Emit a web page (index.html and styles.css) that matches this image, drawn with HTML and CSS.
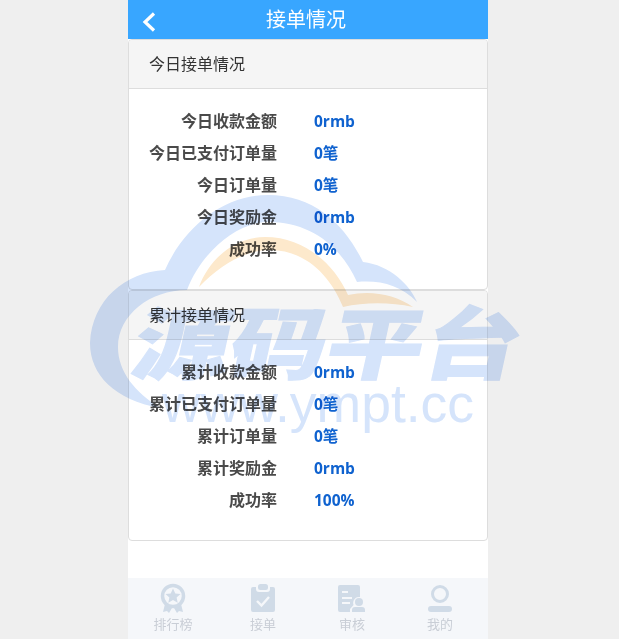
FILE: index.html
```html
<!DOCTYPE html>
<html lang="zh">
<head>
<meta charset="utf-8">
<title>接单情况</title>
<link rel="stylesheet" href="styles.css">
</head>
<body>
<div class="phone">
  <header class="topbar">
    <svg class="back" viewBox="0 0 14 20" width="14" height="20"><path d="M12 1.500 3 10l9 8.500" fill="none" stroke="#fff" stroke-width="3.200"/></svg>
    <h1>接单情况</h1>
  </header>
  <section class="panel">
    <h2>今日接单情况</h2>
    <dl class="stats">
      <div class="row"><dt>今日收款金额</dt><dd>0rmb</dd></div>
      <div class="row"><dt>今日已支付订单量</dt><dd>0笔</dd></div>
      <div class="row"><dt>今日订单量</dt><dd>0笔</dd></div>
      <div class="row"><dt>今日奖励金</dt><dd>0rmb</dd></div>
      <div class="row"><dt>成功率</dt><dd>0%</dd></div>
    </dl>
  </section>
  <section class="panel">
    <h2>累计接单情况</h2>
    <dl class="stats">
      <div class="row"><dt>累计收款金额</dt><dd>0rmb</dd></div>
      <div class="row"><dt>累计已支付订单量</dt><dd>0笔</dd></div>
      <div class="row"><dt>累计订单量</dt><dd>0笔</dd></div>
      <div class="row"><dt>累计奖励金</dt><dd>0rmb</dd></div>
      <div class="row"><dt>成功率</dt><dd>100%</dd></div>
    </dl>
  </section>
  <nav class="tabbar">
    <a class="tab">
      <svg viewBox="0 0 26 30" width="26" height="30"><path d="M5 21 3 29l4-1 2 2 3-5zM21 21l2 8-4-1-2 2-3-5z" fill="#d0dbe7"/><circle cx="13" cy="13" r="10.500" fill="#f5f7fa" stroke="#d0dbe7" stroke-width="3.500"/><path d="m13 5.500 2.300 4.900 5.200.6-3.900 3.500 1.100 5.200-4.700-2.700-4.700 2.700 1.100-5.200L5.500 11l5.200-.6z" fill="#d0dbe7"/></svg>
      <span>排行榜</span>
    </a>
    <a class="tab">
      <svg viewBox="0 0 26 30" width="26" height="30"><path d="M3 4h3v2a3 3 0 0 0 3 3h8a3 3 0 0 0 3-3V4h3a2 2 0 0 1 2 2v21a2 2 0 0 1-2 2H3a2 2 0 0 1-2-2V6a2 2 0 0 1 2-2z" fill="#d0dbe7"/><rect x="8" y="1" width="10" height="6" rx="2.500" fill="#d0dbe7"/><path d="m7 18 4.500 4.500L19 14" fill="none" stroke="#f5f7fa" stroke-width="2.400"/></svg>
      <span>接单</span>
    </a>
    <a class="tab">
      <svg viewBox="0 0 28 28" width="28" height="28"><path d="M2 0h18a2 2 0 0 1 2 2v10a6 6 0 0 0-6.500 8L12 24v3H2a2 2 0 0 1-2-2V2a2 2 0 0 1 2-2z" fill="#d0dbe7"/><path d="M4 7h6M4 13h10M4 18h8" stroke="#f5f7fa" stroke-width="2"/><circle cx="21" cy="17" r="4" fill="#d0dbe7"/><path d="M14 27v-2a3 3 0 0 1 3-3h7a3 3 0 0 1 3 3v2z" fill="#d0dbe7"/></svg>
      <span>审核</span>
    </a>
    <a class="tab">
      <svg viewBox="0 0 26 28" width="26" height="28"><circle cx="13" cy="9" r="7.500" fill="none" stroke="#d0dbe7" stroke-width="3"/><rect x="1" y="21" width="24" height="6" rx="3" fill="#d0dbe7"/></svg>
      <span>我的</span>
    </a>
  </nav>
  <div class="watermark" aria-hidden="true">
    <svg class="cloud" viewBox="90 195 430 260" width="430" height="260">
      <path d="M90 343C92 300 125 272 165 270 185 225 225 195 268 195 315 195 345 225 363 262 390 265 410 285 417 302 400 285 380 280 357 282 340 245 310 222 268 222 235 222 200 255 187 290 150 290 118 315 118 347 118 372 135 392 160 408 115 400 90 375 90 343Z" fill="#d5e4fb"/>
      <path d="M199 287C208 262 232 237 265 237 305 237 335 265 348 295 370 290 395 294 413 307 390 302 365 302 343 307 330 275 305 250 270 250 245 250 220 265 199 287Z" fill="#fde9cc"/>
    </svg>
    <div class="brand">源码平台</div>
    <div class="url">www.ympt.cc</div>
  </div>
</div>
</body>
</html>
```
FILE: styles.css
```css
* { box-sizing: border-box; }
html, body { margin: 0; padding: 0; height: 100%; }
body {
  background: #efefef;
  font-family: "Open Sans", "Noto Sans CJK SC", sans-serif;
  overflow: hidden;
}
.phone {
  position: relative;
  width: 360px;
  height: 639px;
  margin: 0 0 0 128px;
  background: #fff;
  display: flex;
  flex-direction: column;
}
.topbar {
  height: 39px;
  flex: none;
  padding-right: 4px;
  background: #38a6ff;
  display: flex;
  align-items: center;
  justify-content: center;
  position: relative;
}
.back { position: absolute; left: 14px; top: 12px; }
.topbar h1 {
  margin: 0;
  color: #fff;
  font-size: 20px;
  font-weight: 400;
  line-height: 44px;
}
.panel {
  height: 251px;
  flex: none;
  border: 1px solid #ddd;
  border-radius: 4px;
  background: #fff;
}
.panel h2 {
  margin: 0;
  height: 49px;
  padding: 0 20px;
  background: #f5f5f5;
  border-bottom: 1px solid #ddd;
  border-radius: 3px 3px 0 0;
  font-size: 16px;
  font-weight: 400;
  line-height: 49px;
  color: #333;
}
.stats { margin: 0; padding-top: 16px; }
.row {
  display: flex;
  height: 32px;
  align-items: center;
}
.row dt {
  width: 148px;
  text-align: right;
  font-size: 16px;
  line-height: 22px;
  font-weight: 600;
  color: #4a4a4a;
}
.row dd {
  margin: 0 0 0 37px;
  font-size: 15.500px;
  line-height: 20px;
  font-weight: 700;
  color: #0f62cf;
}
.tabbar {
  margin-top: auto;
  height: 61px;
  flex: none;
  background: #f5f7fa;
  display: grid;
  grid-template-columns: 90px 90px 88px 88px;
}
.tab {
  display: flex;
  flex-direction: column;
  align-items: center;
  justify-content: flex-end;
  color: #c9ced6;
  font-size: 13px;
  line-height: 18px;
  padding-bottom: 6px;
  gap: 2px;
}
.watermark {
  position: absolute;
  left: -38px;
  top: 195px;
  width: 430px;
  height: 260px;
  mix-blend-mode: multiply;
  pointer-events: none;
}
.cloud { position: absolute; left: 0; top: 0; }
.brand {
  position: absolute;
  left: 46px;
  top: 89px;
  font-family: "Noto Sans CJK SC", sans-serif;
  font-size: 78px;
  line-height: 110px;
  font-weight: 900;
  color: #d5e4fb;
  -webkit-text-stroke: 1px #d5e4fb;
  white-space: nowrap;
  transform: scaleX(1.24) skewX(-10deg);
  transform-origin: left center;
}
.url {
  position: absolute;
  left: 72px;
  top: 181px;
  font-family: "Liberation Sans", sans-serif;
  font-size: 53.500px;
  line-height: 56px;
  color: #d5e4fb;
  white-space: nowrap;
}
```
